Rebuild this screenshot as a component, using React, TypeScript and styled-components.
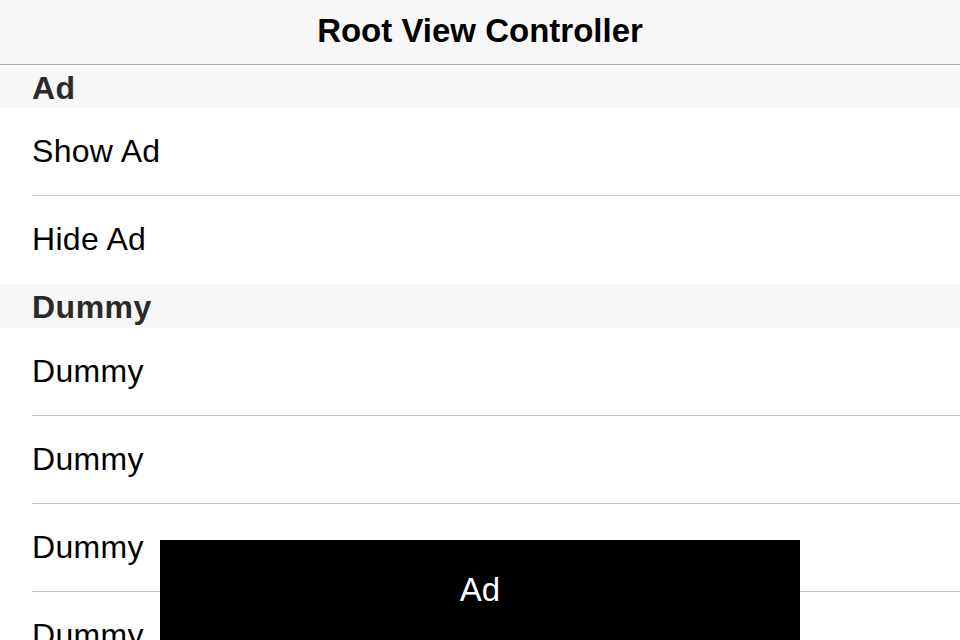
import React from "react";
import styled, { createGlobalStyle } from "styled-components";

const Global = createGlobalStyle`
  html, body { margin: 0; padding: 0; background: #ffffff; }
  body { font-family: "Liberation Sans", Arial, sans-serif; overflow: hidden; }
`;

const Screen = styled.div`
  position: relative;
  width: 960px;
  height: 640px;
  overflow: hidden;
  background: #ffffff;
`;

const NavBar = styled.div`
  height: 64px;
  background: #f7f7f7;
  border-bottom: 1px solid #a9a9ac;
  display: flex;
  align-items: center;
  justify-content: center;
`;

const NavTitle = styled.div`
  font-size: 33px;
  font-weight: 700;
  color: #000;
  letter-spacing: 0px;
  padding-bottom: 2px;
`;

const SectionHeader = styled.div<{ $h: number }>`
  height: ${(p) => p.$h}px;
  box-sizing: border-box;
  background: #f7f7f7;
  display: flex;
  align-items: center;
  padding-left: 32px;
  padding-top: 3px;
  font-size: 32px;
  font-weight: 700;
  letter-spacing: 0.5px;
  color: #2a2a2a;
`;

const Row = styled.div<{ $sep: boolean }>`
  height: 88px;
  box-sizing: border-box;
  display: flex;
  align-items: center;
  padding-left: 32px;
  padding-bottom: 2px;
  position: relative;
  font-size: 32px;
  letter-spacing: 0.3px;
  color: #000;
  &::after {
    content: "";
    display: ${(p) => (p.$sep ? "block" : "none")};
    position: absolute;
    left: 32px;
    right: 0;
    bottom: 0;
    height: 1px;
    background: #c8c7cc;
  }
`;

const AdBanner = styled.div`
  position: absolute;
  left: 160px;
  top: 540px;
  width: 640px;
  height: 100px;
  background: #000;
  color: #fff;
  display: flex;
  align-items: center;
  justify-content: center;
  font-size: 33px;
`;

const sections = [
  { title: "Ad", h: 43, rows: ["Show Ad", "Hide Ad"] },
  { title: "Dummy", h: 44, rows: ["Dummy", "Dummy", "Dummy", "Dummy"] },
];

export default function App() {
  return (
    <>
      <Global />
      <Screen>
        <NavBar>
          <NavTitle>Root View Controller</NavTitle>
        </NavBar>
        {sections.map((s, si) => (
          <React.Fragment key={si}>
            <SectionHeader $h={s.h}>{s.title}</SectionHeader>
            {s.rows.map((r, ri) => (
              <Row key={ri} $sep={ri < s.rows.length - 1}>
                {r}
              </Row>
            ))}
          </React.Fragment>
        ))}
        <AdBanner>Ad</AdBanner>
      </Screen>
    </>
  );
}
